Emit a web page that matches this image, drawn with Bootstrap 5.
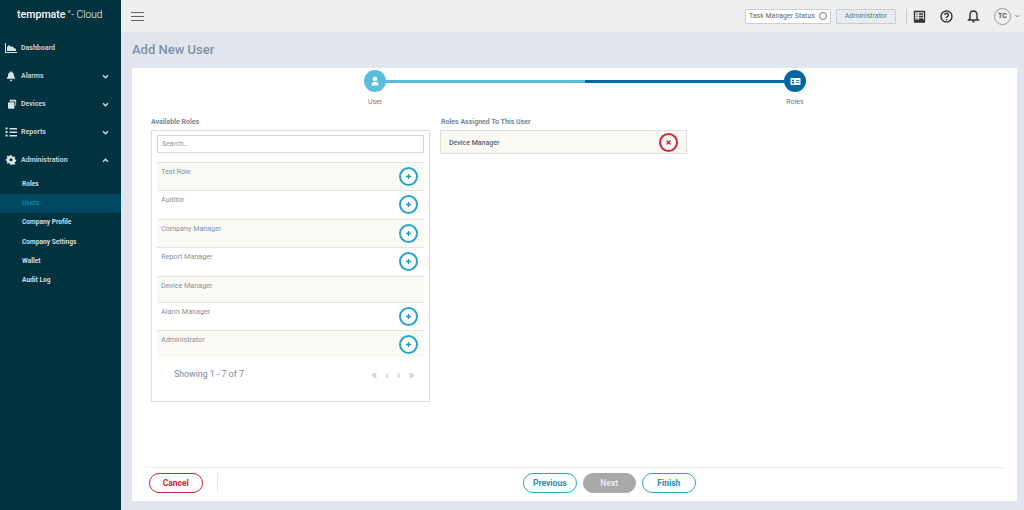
<!DOCTYPE html>
<html lang="en">
<head>
    <meta charset="UTF-8">
    <meta name="viewport" content="width=device-width, initial-scale=1.0">
    <title>Add New User</title>
    <link href="https://cdn.jsdelivr.net/npm/bootstrap@5.3.0/dist/css/bootstrap.min.css" rel="stylesheet">
    <style>
        html, body { height: 510px; overflow: hidden; }
        body { font-family: Roboto, "Liberation Sans", sans-serif; background: #e1e6ee; font-size: 8px; color: #6f7f93; }
        .side-bar { width: 121px; height: 510px; background: #00323f; color: #d5dde0; flex: none; }
        .brand-row { height: 32px; padding-left: 17px; color: #fff; font-size: 10.6px; line-height: 29px; white-space: nowrap; }
        .brand-row b { font-weight: 500; }
        .brand-row i { color: #e2231a; font-style: normal; }
        .brand-row span { font-weight: 300; font-size: 10.2px; margin-left: -1px; }
        .side-menu { padding-top: 2px; }
        .side-item { height: 28px; padding: 0 12px 0 5px; font-size: 7px; font-weight: 700; display: flex; align-items: center; color: #c3cfd4; }
        .side-item svg.ico { width: 12px; height: 12px; margin-right: 4px; fill: #d8e0e3; flex: none; }
        .side-item svg.chev { width: 7px; height: 5px; margin-left: auto; fill: none; stroke: #d8e0e3; stroke-width: 1.6; }
        .side-subs { padding-top: 1px; }
        .side-sub { height: 19.200px; padding-left: 22px; font-size: 6.6px; font-weight: 700; line-height: 19px; color: #d5dde0; }
        .side-sub.current { background: #004a61; color: #0a86a8; }
        .main-area { min-width: 0; }
        .top-bar { height: 32px; background: #efefef; padding: 0 4px 0 10px; }
        .burger { width: 13px; height: 9px; border-top: 1px solid #666; border-bottom: 1px solid #666; position: relative; }
        .burger::after { content: ""; position: absolute; left: 0; right: 0; top: 3px; border-top: 1px solid #666; }
        .status-box { width: 86px; height: 15px; background: #fff; border: 1px solid #c9ced3; border-radius: 1px; padding: 0 3px 0 3px; font-size: 7px; color: #666; white-space: nowrap; }
        .status-dot { width: 8px; height: 8px; border: 1px solid #777; border-radius: 50%; }
        .role-box { width: 60px; height: 15px; background: #e9ecef; border: 1px solid #c9ced3; border-radius: 1px; font-size: 7px; color: #6b7480; text-align: center; line-height: 13px; margin-left: 5px; }
        .top-sep { width: 1px; height: 15px; background: #c6cacd; margin: 0 6px 0 10px; }
        .top-ico { width: 13px; height: 13px; fill: none; stroke: #333; stroke-width: 1.4; }
        .top-gap { margin-left: 14px; }
        .user-ball { width: 17px; height: 17px; border: 1px solid #999; border-radius: 50%; font-size: 7px; font-weight: 700; color: #555; text-align: center; line-height: 15px; margin-left: 14px; }
        .page-title { height: 36px; padding: 10px 0 0 11px; margin: 0; font-size: 13px; font-weight: 500; color: #7f91a7; line-height: 16px; }
        .white-panel { margin-left: 11px; width: 885px; height: 433px; background: #fff; position: relative; padding-top: 2px; }
        .stepper { height: 41px; padding-left: 232px; width: 674px; box-sizing: border-box; }
        .step-one { width: 22px; text-align: center; flex: none; }
        .step-ball { width: 22px; height: 22px; border-radius: 50%; background: #59bddb; display: flex; align-items: center; justify-content: center; }
        .step-ball.dark { background: #00689f; }
        .step-name { font-size: 7px; color: #6f7880; margin-top: 5px; line-height: 10px; white-space: nowrap; margin-left: -10px; margin-right: -10px; }
        .step-line { flex: 1; height: 2.5px; margin-top: 10px; }
        .role-cols { padding: 6px 0 0 19px; }
        .roles-left { width: 279px; }
        .roles-right { width: 247px; margin-left: 10px; }
        .roles-right .col-label { padding-left: 1px; }
        .col-label { font-size: 7px; font-weight: 700; color: #76869b; line-height: 11px; margin-bottom: 2px; }
        .roles-box { height: 272px; border: 1px solid #dcdfe2; padding: 4px 5px; box-shadow: 0 0 1px #eee; }
        .search-field { height: 18px; border: 1px solid #d3d7da; padding: 0 4px; font-size: 7px; color: #8a9198; border-radius: 1px; line-height: 16px; margin-bottom: 9px; }
        .role-row { height: 28.400px; border-top: 1px solid #e6e6e3; padding: 4px 6px 0 4px; font-size: 7.2px; line-height: 10px; color: #8391a5; display: flex; justify-content: space-between; }
        .role-row.short { height: 26px; }
        .role-row.tint { background: #faf9f4; }
        .add-round { width: 19px; height: 19px; border: 2px solid #28a3c7; border-radius: 50%; background: #fff; color: #1d96bb; display: flex; align-items: center; justify-content: center; }
        .pager-row { padding: 10px 10px 0 17px; }
        .pager-text { font-size: 8.8px; color: #7b8a9e; line-height: 12px; }
        .pager-arrows { display: flex; gap: 8px; font-size: 12px; color: #b5b8ba; line-height: 10px; padding-top: 2px; margin-left: -6px; }
        .assigned-box { height: 24px; background: #faf9f4; border: 1px solid #dfe0dd; padding: 2px 8px 0; font-size: 7px; font-weight: 500; color: #59626e; }
        .del-round { width: 19px; height: 19px; border: 2px solid #d9232e; border-radius: 50%; background: #fff; display: flex; align-items: center; justify-content: center; margin-top: -2px; }
        .foot-row { position: absolute; left: 13px; right: 13px; top: 399px; height: 34px; border-top: 1px solid #e9ebec; padding: 5px 0 0 4px; }
        .foot-btns { display: flex; column-gap: 6px; }
        .pill { width: 53.5px; height: 20px; padding: 0; border-radius: 10px; font-size: 8.5px; font-weight: 700; line-height: 17px; background: #fff; }
        .pill-red { border: 1.5px solid #d9232e; color: #d9232e; }
        .pill-blue { border: 1.5px solid #28a3c7; color: #1d8fb3; }
        .pill-grey, .pill-grey:disabled { border: 1.5px solid #a9a9a9; background: #a9a9a9; color: #e8e8e8; opacity: 1; }
        .foot-sep { width: 1px; height: 20px; background: #e6e8ea; margin-left: 14px; margin-right: 305.500px; }
    </style>
</head>
<body>
<div class="d-flex">
    <aside class="side-bar">
        <div class="brand-row"><b>tempmate</b><i>.</i><span>°- Cloud</span></div>
        <nav class="side-menu">
            <div class="side-item">
                <svg class="ico" viewBox="0 0 12 12"><path d="M0 1h1v9h11v1H0zM2 9V5l2-2 2 2 1-1 2 2 2 1v2z"/></svg>Dashboard
            </div>
            <div class="side-item">
                <svg class="ico" viewBox="-1 -1 14 14"><path d="M6 0.5a1 1 0 0 1 1 1c2 .5 2.500 2 2.500 4 0 1.500 1 2.500 1.500 3v.8H1v-.8c.5-.5 1.500-1.500 1.500-3 0-2 .5-3.500 2.500-4a1 1 0 0 1 1-1zM4.500 10.500h3a1.500 1.500 0 0 1-3 0z"/></svg>Alarms
                <svg class="chev" viewBox="0 0 8 6"><path d="M1 1.500l3 3 3-3"/></svg>
            </div>
            <div class="side-item">
                <svg class="ico" viewBox="-2 -1 14 14"><path d="M5 1h5a1 1 0 0 1 1 1v5a1 1 0 0 1-1 1V3H4a1 1 0 0 1 1-2zM2.500 4H8a1 1 0 0 1 1 1v5.500a1 1 0 0 1-1 1H2.500a1 1 0 0 1-1-1V5a1 1 0 0 1 1-1z"/></svg>Devices
                <svg class="chev" viewBox="0 0 8 6"><path d="M1 1.500l3 3 3-3"/></svg>
            </div>
            <div class="side-item">
                <svg class="ico" viewBox="0 0 12 12"><path d="M4.500 2H12v1.400H4.500zM4.500 5.500H12v1.400H4.500zM4.500 9H12v1.400H4.500zM0.500 1.500h2v2h-2zM0.500 5h2v2h-2zM0.500 8.500h2v2h-2z"/></svg>Reports
                <svg class="chev" viewBox="0 0 8 6"><path d="M1 1.500l3 3 3-3"/></svg>
            </div>
            <div class="side-item">
                <svg class="ico" viewBox="-1 -1 14 14"><path fill-rule="evenodd" d="M5 .5h2l.3 1.400 1.100.5 1.300-.8 1.400 1.400-.8 1.300.5 1.100 1.200.3v2l-1.200.3-.5 1.100.8 1.300-1.400 1.400-1.300-.8-1.100.5L7 11.500H5l-.3-1.400-1.100-.5-1.300.8L.9 9.500l.8-1.300-.5-1.100L0 6.800v-2l1.200-.3.5-1.100-.8-1.300 1.400-1.400 1.300.8 1.100-.5zM6 3.900a1.800 1.800 0 1 0 0 3.600 1.800 1.800 0 0 0 0-3.600z"/></svg>Administration
                <svg class="chev" viewBox="0 0 8 6"><path d="M1 4.500l3-3 3 3"/></svg>
            </div>
            <div class="side-subs">
                <div class="side-sub">Roles</div>
                <div class="side-sub current">Users</div>
                <div class="side-sub">Company Profile</div>
                <div class="side-sub">Company Settings</div>
                <div class="side-sub">Wallet</div>
                <div class="side-sub">Audit Log</div>
            </div>
        </nav>
    </aside>
    <div class="main-area flex-grow-1">
        <header class="top-bar d-flex align-items-center">
            <div class="burger"></div>
            <div class="d-flex align-items-center ms-auto">
                <div class="status-box d-flex align-items-center justify-content-between">Task Manager Status<span class="status-dot"></span></div>
                <div class="role-box">Administrator</div>
                <div class="top-sep"></div>
                <svg class="top-ico" viewBox="0 0 13 13"><path d="M1.500 1.500h10v9h-10zM1 12h11M3.500 4h1M6 4h4M3.500 6.500h1M6 6.500h4M3.500 9h1M6 9h4"/></svg>
                <svg class="top-ico top-gap" viewBox="0 0 13 13"><circle cx="6.500" cy="6.500" r="5.500"/><path d="M4.800 5a1.800 1.800 0 1 1 2.600 1.600c-.6.300-.9.700-.9 1.400M6.500 9.300v1"/></svg>
                <svg class="top-ico top-gap" viewBox="0 0 13 13"><path d="M6.500 1c2.500 0 3.500 1.800 3.500 4v3.500l1.300 1.500H1.700L3 8.500V5c0-2.200 1-4 3.500-4zM5.500 11.800h2"/></svg>
                <div class="user-ball">TC</div>
                <svg class="ms-1" width="5" height="4" viewBox="0 0 5 4"><path d="M.5 1l2 2 2-2" fill="none" stroke="#888"/></svg>
            </div>
        </header>
        <h1 class="page-title">Add New User</h1>
        <main class="white-panel">
            <div class="stepper d-flex">
                <div class="step-one">
                    <div class="step-ball">
                        <svg width="10" height="10" viewBox="0 0 10 10"><circle cx="5" cy="3" r="2.200" fill="#fff"/><path d="M1.500 9.500c0-3 1.500-3.800 3.500-3.800s3.500.8 3.500 3.800z" fill="#fff"/></svg>
                    </div>
                    <div class="step-name">User</div>
                </div>
                <div class="step-line" style="background:#59bddb"></div>
                <div class="step-line" style="background:#00689f"></div>
                <div class="step-one">
                    <div class="step-ball dark">
                        <svg width="11" height="9" viewBox="0 0 11 9"><rect x=".5" y="1" width="10" height="7" rx=".6" fill="#fff"/><circle cx="3" cy="3.600" r="1" fill="#00689f"/><path d="M1.500 6.500c0-1 .7-1.500 1.500-1.500s1.500.5 1.500 1.500zM6 3h3.500v.8H6zM6 5h3.500v.8H6z" fill="#00689f"/></svg>
                    </div>
                    <div class="step-name">Roles</div>
                </div>
            </div>
            <div class="role-cols d-flex">
                <section class="roles-left">
                    <div class="col-label">Available Roles</div>
                    <div class="roles-box">
                        <div class="search-field">Search...</div>
                        <div class="role-row tint">Test Role<span class="add-round"><svg width="7" height="7" viewBox="0 0 7 7"><path d="M3.500 1v5M1 3.500h5" stroke="currentColor" stroke-width="1.300"/></svg></span></div>
                        <div class="role-row">Auditor<span class="add-round"><svg width="7" height="7" viewBox="0 0 7 7"><path d="M3.500 1v5M1 3.500h5" stroke="currentColor" stroke-width="1.300"/></svg></span></div>
                        <div class="role-row tint">Company Manager<span class="add-round"><svg width="7" height="7" viewBox="0 0 7 7"><path d="M3.500 1v5M1 3.500h5" stroke="currentColor" stroke-width="1.300"/></svg></span></div>
                        <div class="role-row">Report Manager<span class="add-round"><svg width="7" height="7" viewBox="0 0 7 7"><path d="M3.500 1v5M1 3.500h5" stroke="currentColor" stroke-width="1.300"/></svg></span></div>
                        <div class="role-row short tint">Device Manager</div>
                        <div class="role-row">Alarm Manager<span class="add-round"><svg width="7" height="7" viewBox="0 0 7 7"><path d="M3.500 1v5M1 3.500h5" stroke="currentColor" stroke-width="1.300"/></svg></span></div>
                        <div class="role-row tint">Administrator<span class="add-round"><svg width="7" height="7" viewBox="0 0 7 7"><path d="M3.500 1v5M1 3.500h5" stroke="currentColor" stroke-width="1.300"/></svg></span></div>
                        <div class="pager-row d-flex justify-content-between">
                            <div class="pager-text">Showing 1 - 7 of 7</div>
                            <div class="pager-arrows"><span>«</span><span>‹</span><span>›</span><span>»</span></div>
                        </div>
                    </div>
                </section>
                <section class="roles-right">
                    <div class="col-label">Roles Assigned To This User</div>
                    <div class="assigned-box d-flex align-items-center justify-content-between">
                        Device Manager
                        <span class="del-round"><svg width="7" height="7" viewBox="0 0 7 7"><path d="M1.500 1.500l4 4M5.500 1.500l-4 4" stroke="#d9232e" stroke-width="1.500"/></svg></span>
                    </div>
                </section>
            </div>
            <div class="foot-row d-flex align-items-start">
                <button class="btn pill pill-red" type="button">Cancel</button>
                <div class="foot-sep"></div>
                <div class="foot-btns">
                    <button class="btn pill pill-blue" type="button">Previous</button>
                    <button class="btn pill pill-grey" type="button" disabled>Next</button>
                    <button class="btn pill pill-blue" type="button">Finish</button>
                </div>
            </div>
        </main>
    </div>
</div>
<script src="https://cdn.jsdelivr.net/npm/bootstrap@5.3.0/dist/js/bootstrap.bundle.min.js"></script>
</body>
</html>
